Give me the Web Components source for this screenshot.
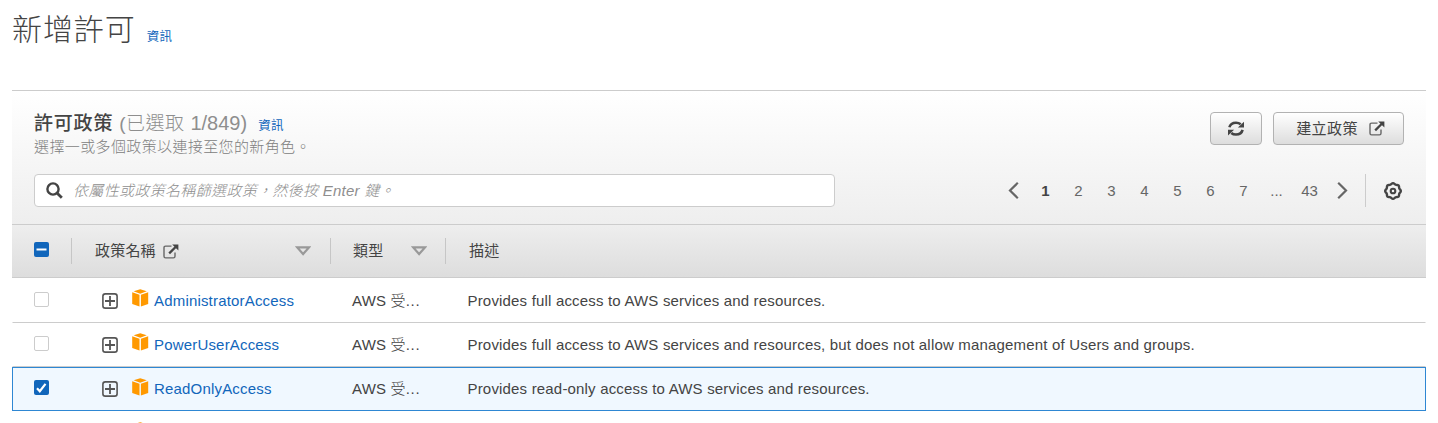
<!DOCTYPE html>
<html lang="zh-Hant">
<head>
<meta charset="utf-8">
<title>新增許可</title>
<style>
  body { margin: 0; background: #fff; height: 423px; overflow: hidden; color: #444; font: 15px/20px "Liberation Sans", "Noto Sans CJK TC", sans-serif; }
</style>
</head>
<body>
<permissions-page></permissions-page>
<script>
const define = (name, html) => customElements.define(name, class extends HTMLElement {
  constructor() {
    super();
    this.attachShadow({ mode: 'open' });
  }
  connectedCallback() {
    const t = document.createElement('template');
    t.innerHTML = typeof html === 'function' ? html(this) : html;
    this.shadowRoot.replaceChildren(t.content.cloneNode(true));
  }
});

const gearPoints = Array.from({ length: 64 }, (_, i) => {
  const a = i * Math.PI / 32, r = 7.3 + 0.5 * Math.cos(8 * a);
  return (9 + r * Math.sin(a)).toFixed(2) + ',' + (9 - r * Math.cos(a)).toFixed(2);
}).join(' ');

const icons = {
  refresh: [16, 16, '<path d="M1.4 6.3C2.2 3.2 4.8 1.7 8 1.7c1.9 0 3.5.6 4.7 1.6M14.6 8.9c-.8 3.1-3.4 4.6-6.6 4.6-1.9 0-3.5-.6-4.7-1.6" fill="none" stroke="#444" stroke-width="2.6"/><path d="M16 .7v5.8H9.9zM0 14.5V8.7h6.1z" fill="#444"/>'],
  external: [16, 15, '<path d="M8.5 2.1H2.6Q1 2.1 1 3.7v8.6q0 1.6 1.6 1.6h7.8q1.6 0 1.6-1.6V8.6" fill="none" stroke="#666" stroke-width="1.4"/><path d="M6.2 9.4 12.6 3" stroke="#444" stroke-width="2.3"/><path d="M9.2.4h6.2v6.2z" fill="#444"/>'],
  search: [17, 17, '<circle cx="7" cy="7" r="5.6" fill="none" stroke="#444" stroke-width="2.4"/><path d="m11 11 4.8 4.8" stroke="#444" stroke-width="2.8"/>'],
  prev: [11, 17, '<path d="M9.8.8 2 8.5l7.8 7.7" fill="none" stroke="#666" stroke-width="2.2"/>'],
  next: [11, 17, '<path d="M1.2.8 9 8.5l-7.8 7.7" fill="none" stroke="#666" stroke-width="2.2"/>'],
  gear: [18, 18, `<polygon points="${gearPoints}" fill="none" stroke="#444" stroke-width="2.4"/><circle cx="9" cy="9" r="2.3" fill="none" stroke="#444" stroke-width="2.1"/>`],
  sort: [16, 10, '<path d="M2.2 1.4h11.8L8.1 8.1Z" fill="none" stroke="#999" stroke-width="2.2"/>'],
  plus: [16, 16, '<rect x=".9" y=".9" width="14.2" height="14.2" rx="2.4" fill="none" stroke="#555" stroke-width="1.6"/><path d="M3 8h10M8 3v10" stroke="#555" stroke-width="1.8"/>'],
  cube: [17, 18, '<path d="M8.2.2 14.8 2.3 8.2 4.7 1.6 2.3ZM.2 3.3l7.3 2.4v11.8L.2 14.9ZM16.2 3.3 8.9 5.7v11.8l7.3-2.6Z" fill="#ff9900"/>']
};

define('ui-icon', el => {
  const [w, h, body] = icons[el.getAttribute('name')];
  return `<style>:host{display:block;flex:none;width:${w}px;height:${h}px}svg{display:block}</style><svg width="${w}" height="${h}" viewBox="0 0 ${w} ${h}">${body}</svg>`;
});

define('ui-checkbox', el => {
  const s = el.getAttribute('state');
  const mark = s === 'mixed' ? '<path d="M2.5 7.5h10" stroke="#fff" stroke-width="2"/>'
    : s === 'on' ? '<path d="m3 8.2 2.8 3L11.5 3.8" fill="none" stroke="#fff" stroke-width="2.2"/>' : '';
  return `<style>:host{display:block;box-sizing:border-box;width:15px;height:15px;border-radius:2px;
    ${s ? 'background:#1166bb' : 'background:#fff;border:1px solid #ccc'}}svg{display:block}</style>
    ${mark && `<svg width="15" height="15">${mark}</svg>`}`;
});

define('ui-button', `<style>
  :host { display: flex; box-sizing: border-box; height: 33px; align-items: center; justify-content: center; gap: 11px;
    border: 1px solid #b2b2b2; border-radius: 4px; background: linear-gradient(#fff, #ddd); font-size: 15px; letter-spacing: .4px; color: #444; }
</style><slot></slot>`);

define('info-link', `<style>
  :host { display: inline-block; color: #1166bb; font-size: 12.5px; line-height: 16px; letter-spacing: .2px; font-weight: 400; }
</style><slot></slot>`);

define('search-box', `<style>
  :host { display: flex; box-sizing: border-box; width: 801px; height: 33px; align-items: center; gap: 10px; padding-left: 11px;
    border: 1px solid #ccc; border-radius: 4px; background: #fff; color: #8e8e8e; font-style: italic; }
  .t { letter-spacing: .33px; white-space: nowrap; font-weight: 300; }
  .l { letter-spacing: .2px; }
</style><ui-icon name="search"></ui-icon><span class="t">依屬性或政策名稱篩選政策，然後按 <span class="l">Enter</span> 鍵。</span>`);

define('page-nav', `<style>
  :host { display: flex; height: 33px; align-items: center; color: #666; }
  span { width: 33px; text-align: center; }
  .on { font-weight: bold; color: #444; }
  .prev { margin-right: 10px; }
  .next { margin-left: 11px; margin-right: 17px; }
  .gear { border-left: 1px solid #ccc; height: 33px; display: flex; align-items: center; padding-left: 18px; }
</style>
<ui-icon class="prev" name="prev"></ui-icon>
<span class="on">1</span><span>2</span><span>3</span><span>4</span><span>5</span><span>6</span><span>7</span><span>...</span><span>43</span>
<ui-icon class="next" name="next"></ui-icon>
<div class="gear"><ui-icon name="gear"></ui-icon></div>`);

define('panel-header', `<style>
  :host { display: flex; flex-direction: column; justify-content: space-between; box-sizing: border-box; height: 135px;
    padding: 21px 22px 17px; border-top: 1px solid #ccc; border-bottom: 1px solid #ccc; background: linear-gradient(#fff, #eee); }
  .row { display: flex; justify-content: space-between; }
  h2 { margin: 0; font-size: 19px; line-height: 22px; height: 22px; font-weight: 500; letter-spacing: .8px; white-space: nowrap; }
  .count { font-weight: 300; color: #8e8e8e; letter-spacing: .5px; }
  .n { font-size: 20px; letter-spacing: 0; }
  info-link { margin-left: 5px; }
  p { margin: 3px 0 -3px; line-height: 20px; color: #808080; font-weight: 300; letter-spacing: .38px; white-space: nowrap; }
  .actions { display: flex; gap: 11px; }
  .r { width: 52px; }
  .c { width: 131px; }
  .c span { padding-left: 4px; }
  page-nav { margin-right: 2px; }
</style>
<div class="row">
  <div><h2>許可政策 <span class="count">(已選取 <span class="n">1/849)</span></span> <info-link>資訊</info-link></h2><p>選擇一或多個政策以連接至您的新角色。</p></div>
  <div class="actions"><ui-button class="r"><ui-icon name="refresh"></ui-icon></ui-button><ui-button class="c"><span>建立政策</span><ui-icon name="external"></ui-icon></ui-button></div>
</div>
<div class="row"><search-box></search-box><page-nav></page-nav></div>`);

define('table-head', `<style>
  :host { display: grid; grid-template-columns: 59px 259px 115px 1fr; align-items: center; box-sizing: border-box; height: 53px;
    border-bottom: 1px solid #ccc; background: linear-gradient(#eee, #ddd); }
  ui-checkbox { margin: 0 0 3px 22px; }
  .c { display: flex; align-items: center; box-sizing: border-box; height: 26px; border-left: 1px solid #c6c6c6; padding-left: 23px; letter-spacing: .2px; }
  .s { margin-left: auto; margin-right: 19px; }
  .e { margin-left: 7px; }
  .t { padding-left: 22px; }
  .t .s { margin-right: 18px; }
</style>
<ui-checkbox state="mixed"></ui-checkbox>
<div class="c">政策名稱<ui-icon class="e" name="external"></ui-icon><ui-icon class="s" name="sort"></ui-icon></div>
<div class="c t">類型<ui-icon class="s" name="sort"></ui-icon></div>
<div class="c">描述</div>`);

define('policy-row', el => {
  const on = el.hasAttribute('selected'), type = el.getAttribute('type');
  return `<style>
  :host { display: grid; grid-template-columns: 90px 30px 220px 115px 1fr; align-items: center; box-sizing: border-box; height: 44px; white-space: nowrap;
    border: 1px solid transparent; border-bottom-color: #ccc; padding-bottom: 2px; letter-spacing: .18px; }
  :host([selected]) { border-color: #2e87d3; background: #f0f8ff; }
  ui-checkbox { margin: 0 0 1px 21px; }
  .plus { margin-top: 2px; margin-left: -1px; }
  .n { display: flex; align-items: center; gap: 5px; margin-left: -1px; color: #1166bb; }
  .n ui-icon { margin-top: -4px; }
  :host([selected]) .n ui-icon, :host([name=""]) .n ui-icon { margin-top: -2px; }
  .n span, .t, .d { padding-top: 2px; }
  .t { margin-left: -1px; }
  .t i { font-style: normal; font-weight: 300; }
  .t b { font-weight: 400; letter-spacing: .7px; }
  .d { margin-left: -.5px; }
</style>
<ui-checkbox state="${on ? 'on' : ''}"></ui-checkbox>
<ui-icon class="plus" name="plus"></ui-icon>
<div class="n"><ui-icon name="cube"></ui-icon><span>${el.getAttribute('name')}</span></div>
<div class="t">${type ? `${type} <i>受</i><b>...</b>` : ''}</div>
<div class="d"><slot></slot></div>`;
});

define('permissions-page', `<style>
  :host { display: block; padding: 0 12px; height: 423px; box-sizing: border-box; overflow: hidden; }
  header { height: 90px; box-sizing: border-box; padding: 9px 0 0; white-space: nowrap; }
  h1 { margin: 0; font-size: 30px; line-height: 42px; font-weight: 300; letter-spacing: .9px; }
  h1 info-link { margin-left: 2px; transform: translateY(1px); }
  .first { height: 45px; padding-bottom: 1px; }
</style>
<header><h1>新增許可 <info-link>資訊</info-link></h1></header>
<panel-header></panel-header>
<table-head></table-head>
<policy-row class="first" name="AdministratorAccess" type="AWS">Provides full access to AWS services and resources.</policy-row>
<policy-row name="PowerUserAccess" type="AWS">Provides full access to AWS services and resources, but does not allow management of Users and groups.</policy-row>
<policy-row name="ReadOnlyAccess" type="AWS" selected>Provides read-only access to AWS services and resources.</policy-row>
<policy-row name=""></policy-row>`);
</script>
</body>
</html>
